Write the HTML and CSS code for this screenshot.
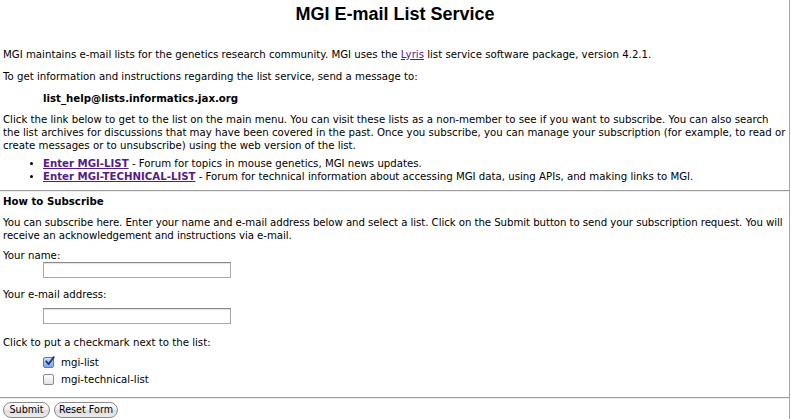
FILE: index.html
```html
<!DOCTYPE html>
<html>
<head>
<meta charset="utf-8">
<title>MGI E-mail List Service</title>
<link rel="stylesheet" href="styles.css">
</head>
<body>
<div class="frame">
  <h1 class="title">MGI E-mail List Service</h1>
  <p class="p1">MGI maintains e-mail lists for the genetics research community. MGI uses the <a href="#" class="link">Lyris</a> list service software package, version 4.2.1.</p>
  <p class="p2">To get information and instructions regarding the list service, send a message to:</p>
  <p class="addr">list_help@lists.informatics.jax.org</p>
  <p class="p3">Click the link below to get to the list on the main menu. You can visit these lists as a non-member to see if you want to subscribe. You can also search<br>the list archives for discussions that may have been covered in the past. Once you subscribe, you can manage your subscription (for example, to read or<br>create messages or to unsubscribe) using the web version of the list.</p>
  <ul class="lists">
    <li><a href="#" class="link strong">Enter MGI-LIST</a> - Forum for topics in mouse genetics, MGI news updates.</li>
    <li><a href="#" class="link strong">Enter MGI-TECHNICAL-LIST</a> - Forum for technical information about accessing MGI data, using APIs, and making links to MGI.</li>
  </ul>
  <div class="rule rule-top"></div>
  <h2 class="subhead">How to Subscribe</h2>
  <p class="p4">You can subscribe here. Enter your name and e-mail address below and select a list. Click on the Submit button to send your subscription request. You will<br>receive an acknowledgement and instructions via e-mail.</p>
  <form class="form">
    <div class="label l-name">Your name:</div>
    <input type="text" class="field">
    <div class="label l-mail">Your e-mail address:</div>
    <input type="text" class="field f-mail">
    <div class="label l-click">Click to put a checkmark next to the list:</div>
    <div class="checks">
      <div class="check-row">
        <span class="box checked"><svg width="11" height="11" viewBox="0 0 11 11"><path d="M2.2 5.4 L4.6 8.2 L9.8 1.2" fill="none" stroke="#1b3f8f" stroke-width="2" stroke-linecap="round" stroke-linejoin="round"/></svg></span>
        <span class="check-text">mgi-list</span>
      </div>
      <div class="check-row">
        <span class="box"></span>
        <span class="check-text">mgi-technical-list</span>
      </div>
    </div>
    <div class="rule rule-bottom"></div>
    <div class="buttons">
      <button type="button" class="btn b-submit">Submit</button>
      <button type="button" class="btn b-reset">Reset Form</button>
    </div>
  </form>
</div>
</body>
</html>
```
FILE: styles.css
```css
html, body {
  margin: 0;
  padding: 0;
  background: #fff;
}
body {
  font-family: "DejaVu Sans", Verdana, sans-serif;
  font-size: 10.2px;
  line-height: 13px;
  color: #000;
}
.frame {
  width: 786px;
  height: 419px;
  padding-left: 3px;
  border-right: 1px solid #a4a4a4;
  overflow: hidden;
  white-space: nowrap;
}
.title {
  margin: 0;
  padding-top: 3px;
  height: 22px;
  line-height: 22px;
  font-family: "Liberation Sans", Arial, sans-serif;
  font-size: 18px;
  font-weight: bold;
  text-align: center;
  padding-right: 2px;
}
p { margin: 0; }
.p1 { margin-top: 23px; }
.p2 { margin-top: 9px; }
.addr { margin-top: 9px; padding-left: 40px; font-weight: bold; }
.p3 { margin-top: 8px; }
.link { color: #551a8b; text-decoration: underline; }
.strong { font-weight: bold; }
.lists {
  margin: 5px 0 0 0;
  padding-left: 40px;
}
.lists li { list-style: disc; }
.rule {
  height: 0;
  border-top: 1px solid #9c9c9c;
  border-bottom: 1px solid #eeeeee;
  margin-left: -3px;
}
.rule-top { margin-top: 7px; }
.subhead {
  margin: 3px 0 0 0;
  font-size: 10.2px;
  line-height: 13px;
  font-weight: bold;
}
.p4 { margin-top: 8px; letter-spacing: -0.06px; }
.form { margin: 0; }
.label { line-height: 13px; }
.l-name { margin-top: 7px; }
.field {
  display: block;
  box-sizing: border-box;
  width: 188px;
  height: 16px;
  margin: 0 0 0 40px;
  padding: 0;
  border: 1px solid #a9a9a9;
  border-top-color: #8a8a8a;
  box-shadow: inset 0 1px 1px rgba(0,0,0,0.12);
  background: #fff;
}
.l-mail { margin-top: 10px; }
.f-mail { margin-top: 7px; }
.l-click { margin-top: 12px; }
.checks {
  margin-top: 5px;
  padding-left: 40px;
}
.check-row {
  display: flex;
  align-items: center;
  height: 17px;
  gap: 7px;
}
.box {
  box-sizing: border-box;
  width: 11px;
  height: 11px;
  border: 1px solid #8c8c8c;
  border-radius: 2px;
  background: linear-gradient(#ffffff, #e2e2e2);
  display: flex;
  align-items: center;
  justify-content: center;
  overflow: visible;
}
.box svg { display: block; margin: -2px -2px 0 0; }
.box.checked {
  border-color: #5a7cb5;
  background: linear-gradient(#cfe1f7, #7ea9e3);
}
.rule-bottom { margin-top: 9px; }
.buttons {
  display: flex;
  gap: 4px;
  margin-top: 3px;
}
.btn {
  box-sizing: border-box;
  height: 16px;
  padding: 0 8px;
  border: 1px solid #8a8a8a;
  border-radius: 8px;
  background: linear-gradient(#ffffff 0%, #f1f1f1 45%, #dcdcdc 55%, #ececec 100%);
  font-family: "DejaVu Sans", Verdana, sans-serif;
  font-size: 9.6px;
  line-height: 14px;
  color: #000;
}
.b-submit { width: 47px; padding: 0; }
.b-reset { width: 64px; padding: 0; }
```
